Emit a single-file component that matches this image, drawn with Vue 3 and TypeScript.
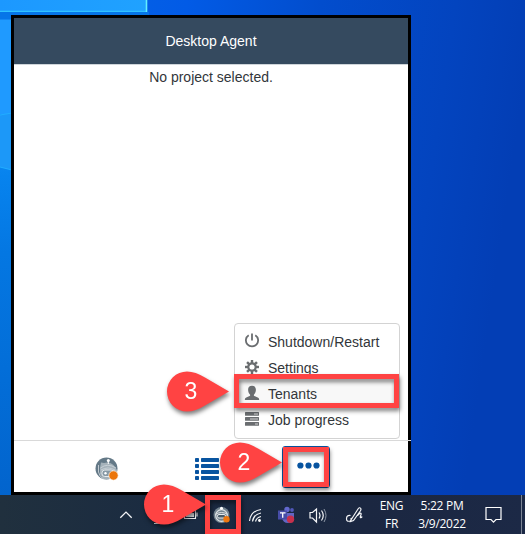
<script setup lang="ts">
interface MenuItem { label: string; icon: 'power' | 'gear' | 'user' | 'tasks'; active?: boolean }
interface Pin { step: number; name: string }
const menu: MenuItem[] = [
  { label: 'Shutdown/Restart', icon: 'power' },
  { label: 'Settings', icon: 'gear' },
  { label: 'Tenants', icon: 'user', active: true },
  { label: 'Job progress', icon: 'tasks' },
]
const pins: Pin[] = [
  { step: 1, name: 'one' },
  { step: 2, name: 'two' },
  { step: 3, name: 'three' },
]
const teeth = [0, 45, 90, 135, 180, 225, 270, 315]
</script>

<template>
  <div class="desktop">
    <svg class="wallpaper" viewBox="0 0 525 534" preserveAspectRatio="none">
      <defs>
        <linearGradient id="sky" x1="0" x2="1" y1="0" y2="0.15">
          <stop offset="0" stop-color="#0768e6" />
          <stop offset="0.35" stop-color="#025be6" />
          <stop offset="0.6" stop-color="#024dcd" />
          <stop offset="0.85" stop-color="#0344bf" />
          <stop offset="1" stop-color="#033eb5" />
        </linearGradient>
        <linearGradient id="pane" x1="0" x2="0" y1="0" y2="1">
          <stop offset="0" stop-color="#22a0ff" />
          <stop offset="0.2" stop-color="#1593fb" />
          <stop offset="0.34" stop-color="#0783ee" />
          <stop offset="0.5" stop-color="#0477e2" />
          <stop offset="1" stop-color="#0264cd" />
        </linearGradient>
        <linearGradient id="beam" x1="0" x2="1" y1="0" y2="0">
          <stop offset="0" stop-color="#1c98ff" />
          <stop offset="1" stop-color="#20a2ff" />
        </linearGradient>
      </defs>
      <rect width="525" height="534" fill="url(#sky)" />
      <rect y="12" width="12" height="483" fill="url(#pane)" />
      <rect y="19" width="12" height="95" fill="#1f9aff" />
      <path d="M0 115 12 113V170L0 167Z" fill="#1c98f8" />
      <path d="M0 115 12 113M0 167 12 170" stroke="#22adff" fill="none" />
      <rect width="147" height="12" fill="url(#beam)" />
      <path d="M0 11.3H147" stroke="#30c2ff" stroke-width="1.2" />
      <path d="M146.500 0V12" stroke="#62edff" stroke-width="1.600" />
      <path d="M0 12H149V19.500H0Z" fill="#0675e8" />
    </svg>

    <section class="window">
      <header class="title">Desktop Agent</header>
      <main class="content">No project selected.</main>
      <nav class="toolbar">
        <span class="tool robot-tool">
          <svg width="24" height="24" viewBox="0 0 24 24">
            <circle cx="11.500" cy="11.500" r="11" fill="#647987" />
            <path d="M5 17V11L6 5.500l3 .5q7-2 11 4l2 3v5l-5 4H8Z" fill="#a5b2ba" />
            <path d="M5.500 11q7-5.500 15.500 0M3.500 8v7q1 5 5 7M6 13q7-4 14 0" fill="none" stroke="#cbd3d8" stroke-width=".9" />
            <rect x="7" y="13" width="12" height="6.500" rx="2.800" fill="#8799a5" stroke="#e4e9ec" />
            <circle cx="13.300" cy="3.500" r="1.500" fill="#fff" />
            <path d="M13.300 4v3" stroke="#fff" />
            <circle cx="10.500" cy="16.300" r="1.200" fill="#fff" />
            <circle cx="18.500" cy="18.500" r="4.700" fill="#eb760c" stroke="#fff" stroke-width=".7" />
          </svg>
        </span>
        <span class="tool list-tool">
          <svg width="24" height="22" viewBox="0 0 24 22" fill="#0854a0">
            <g v-for="n in 4" :key="n">
              <rect x="0" :y="(n - 1) * 6" width="4" height="4" rx=".8" />
              <rect x="6" :y="(n - 1) * 6" width="18" height="4" rx=".7" />
            </g>
          </svg>
        </span>
        <span class="tool more-tool">
          <svg width="23" height="7" viewBox="0 0 23 7" fill="#0854a0">
            <circle cx="3.400" cy="3.500" r="3.100" /><circle cx="11.500" cy="3.500" r="3.100" /><circle cx="19.500" cy="3.500" r="3.100" />
          </svg>
        </span>
      </nav>
    </section>

    <ul class="menu">
      <li v-for="item in menu" :key="item.label" :class="{ active: item.active }">
        <svg width="16" height="16" viewBox="0 0 16 16">
          <g v-if="item.icon === 'power'" fill="none" stroke="#6a6d70" stroke-width="1.800">
            <path d="M4.700 2.200a6.100 6.100 0 1 0 6.600 0M8 .5v7" />
          </g>
          <g v-else-if="item.icon === 'gear'" fill="#6a6d70">
            <rect v-for="angle in teeth" :key="angle" x="6.800" y="1" width="2.400" height="4" :transform="`rotate(${angle} 8 8)`" />
            <circle cx="8" cy="8" r="3.700" fill="none" stroke="#6a6d70" stroke-width="2.200" />
          </g>
          <path v-else-if="item.icon === 'user'" fill="#6a6d70" d="M8 .8c2.600 0 3.900 1.600 3.900 4 0 2.200-.9 4-2 5v1l4.300 1.900q1 .5 1 2.300H.8q0-1.800 1-2.300l4.300-1.900v-1c-1.100-1-2-2.800-2-5C4.100 2.400 5.400.8 8 .8Z" />
          <g v-else>
            <rect v-for="n in 3" :key="n" x="1" :y="n * 5 - 4" width="14" height="3.800" rx=".5" fill="#6a6d70" />
            <path d="M10 3h4M6 8h8M11 13h3" stroke="#d2d3d4" stroke-width="1" />
          </g>
        </svg>
        <span>{{ item.label }}</span>
      </li>
    </ul>

    <footer class="taskbar">
      <svg class="tray" width="376" height="39" viewBox="0 0 376 39" fill="none" stroke="#f4f5f7">
        <path d="m120.300 22.800 5.700-5.700 5.700 5.700" stroke-width="1.300" />
        <path d="M184.500 15.500h11v8h-11ZM197 17.500v4" stroke-width="1.100" />
        <path d="M186 18h8v4h-8Z" fill="#e4e6e9" stroke="none" />
        <path d="M154 28.500h8" stroke-width="1" />
        <g>
          <circle cx="221.500" cy="20" r="8" fill="#72838f" stroke="none" />
          <circle cx="221.500" cy="20.500" r="5.800" fill="#71828e" stroke="#dce1e4" stroke-width="1.200" />
          <path d="M215 19.500q6.500-4 13 0" stroke="#dce1e4" />
          <rect x="217.500" y="19.500" width="8" height="3.500" rx="1.500" fill="#465b69" stroke="#e7eaec" />
          <circle cx="221.500" cy="13.200" r="1.500" fill="#fff" stroke="none" />
          <circle cx="226.500" cy="24.300" r="3.200" fill="#ed7710" stroke="none" />
        </g>
        <path d="M249.500 26q1-10 11.500-11.500M252.500 26.500q1-7 8.500-8.500M255.500 26.500q1-4 5.500-5" stroke-width="1.200" />
        <circle cx="259.500" cy="25.500" r="1.400" fill="#fff" stroke="none" />
        <g stroke="none">
          <circle cx="287" cy="14.500" r="2.700" fill="#6268ce" />
          <circle cx="292" cy="15" r="1.900" fill="#5057b8" />
          <path d="M282 18h12v5q-1 5-6 5-5 0-6-5Z" fill="#6266c4" />
          <rect x="278" y="15.500" width="9" height="9" fill="#474da8" />
          <path d="M280 17.800h5.500M282.700 17.800v5" stroke="#fff" stroke-width="1.300" />
          <circle cx="290.500" cy="24.300" r="3.700" fill="#c7304c" />
        </g>
        <path d="M310 17.500h2.500l4-3.500v13l-4-4H310ZM319 17.500q2 3 0 6M321.500 15.500q3.500 5 0 10" stroke-width="1.200" />
        <path d="M324 14q4 6.500 0 13" stroke="#8d97a6" />
        <path d="M350.500 20.500q-4-.5-4 3.300 0 3.200 3.500 2.200 1.500-.6 1-3.200M351 25l7-11q1.500-2 2.500-.8 1 1-.2 2.800l-6.800 9.500-3 1ZM357.500 20.500q3.500-3.800 3.700-1.500l-1 3q.2 1.500 2-.5" stroke-width="1.200" />
      </svg>
      <div class="language"><span>ENG</span><span>FR</span></div>
      <div class="clock"><span>5:22 PM</span><span>3/9/2022</span></div>
      <svg class="notice" width="18" height="18" viewBox="0 0 18 18" fill="none" stroke="#fff" stroke-width="1.200">
        <path d="M1 1.500h15v12h-5l-2.500 2.700L6 13.500H1Z" />
      </svg>
      <i class="show-desktop"></i>
    </footer>

    <i v-for="pin in pins" :key="`box-${pin.step}`" class="highlight" :class="`box-${pin.name}`"></i>
    <div v-for="pin in pins" :key="pin.step" class="pin" :class="`pin-${pin.name}`">
      <svg width="63" height="41" viewBox="0 0 63 41">
        <path d="M20 .5Q28.500.5 38 6.500L62 20.500 38 34.500Q28.500 40.500 20 40.500A20 20 0 0 1 20 .5Z" fill="#ff4343" />
      </svg>
      <span>{{ pin.step }}</span>
    </div>
  </div>
</template>

<style>
body { margin: 0; overflow: hidden; }
</style>
<style scoped>
.desktop { position: relative; width: 525px; height: 534px; overflow: hidden; display: flex; flex-direction: column; font-family: "Liberation Sans", Arial, sans-serif; color: #32363a; }
.wallpaper { position: absolute; inset: 0; width: 100%; height: 100%; }
.window { position: relative; box-sizing: border-box; width: 400px; height: 480px; margin: 15px 0 0 11px; border: 3px solid #000; background: #fff; display: flex; flex-direction: column; }
.title { height: 46px; border-bottom: 1px solid #cfd5da; background: #354a5f; color: #fff; font-size: 14px; line-height: 46px; text-align: center; }
.content { flex: 1; padding-top: 4px; font-size: 14px; line-height: 16px; text-align: center; }
.toolbar { height: 51px; padding-top: 1px; margin-right: -3px; background: linear-gradient(#d9d9d9 0 0) top / 100% 1px no-repeat, linear-gradient(#000 0 0) right / 3px 100% no-repeat; display: flex; align-items: center; }
.tool { display: flex; align-items: center; justify-content: center; }
.tool svg { display: block; }
.robot-tool { width: 24px; margin: 4px 0 0 81px; }
.list-tool { width: 24px; margin: 4px 0 0 76px; }
.more-tool { box-sizing: border-box; width: 48px; height: 42px; margin-left: 63px; border: 1px solid #0854a0; border-radius: 3px; padding: 0 0 3px 5px; }
.menu { position: absolute; left: 234px; top: 323px; box-sizing: border-box; width: 166px; height: 116px; margin: 0; padding: 5px 0; border: 1px solid #d3d3d3; border-radius: 4px; background: #fff; list-style: none; }
.menu li { height: 26px; padding-left: 9px; display: flex; align-items: center; gap: 8px; font-size: 14px; line-height: 26px; }
.menu li.active { background: #f8f8f8; }
.menu svg { margin-top: -2px; }
.taskbar { position: relative; height: 39px; background: linear-gradient(90deg, #20303e, #1a2b42 35%, #1b2741 70%, #1c2946); display: flex; align-items: center; color: #fff; font: 12px/17.500px "Open Sans", "Noto Sans", sans-serif; letter-spacing: -.3px; }
.tray { flex: none; }
.language, .clock { display: flex; flex-direction: column; align-items: center; }
.language { width: 31px; }
.clock { width: 56px; margin-left: 7px; }
.notice { margin-left: 15px; }
.show-desktop { margin-left: auto; width: 1px; height: 39px; margin-right: 3px; background: #7b8494; }
.highlight { position: absolute; box-sizing: border-box; border: 5px solid #ff4343; filter: drop-shadow(1px 3px 2px rgba(0, 0, 0, .5)); }
.box-one { left: 205px; top: 495px; width: 36px; height: 39px; }
.box-two { left: 283px; top: 447px; width: 46px; height: 40px; }
.box-three { left: 234px; top: 374px; width: 165px; height: 34px; }
.pin { position: absolute; width: 63px; height: 41px; filter: drop-shadow(1px 3px 2px rgba(0, 0, 0, .5)); }
.pin svg { display: block; }
.pin span { position: absolute; left: 4px; top: 0; width: 40px; color: #fff; font-size: 23px; line-height: 41px; text-align: center; }
.pin-one { left: 144px; top: 484px; }
.pin-two { left: 220px; top: 442px; }
.pin-three { left: 167px; top: 371px; }
</style>
